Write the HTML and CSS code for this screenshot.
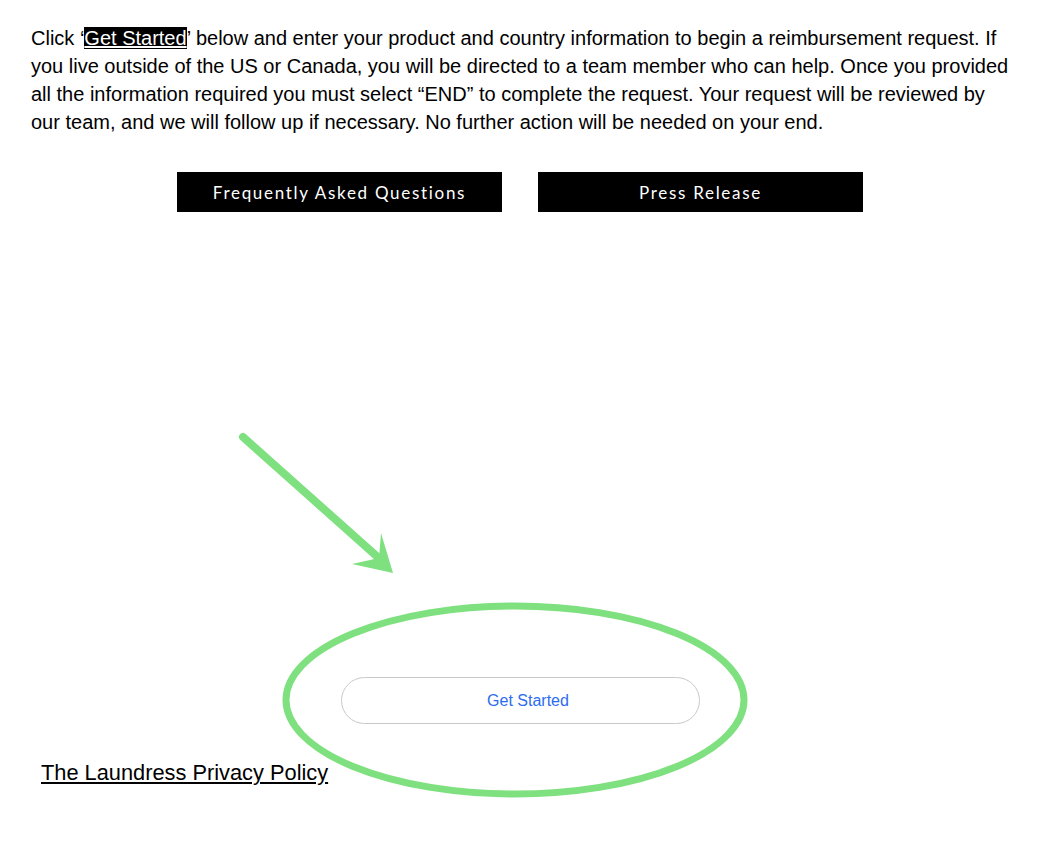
FILE: index.html
```html
<!DOCTYPE html>
<html lang="en">

<head>
    <meta charset="UTF-8">
    <meta name="viewport" content="width=device-width, initial-scale=1.0">
    <title>Reimbursement Request</title>
    <link rel="stylesheet" href="styles.css">
</head>

<body>

    <main class="page">
        <p class="intro">
            Click &lsquo;<span class="mark">Get Started</span>&rsquo; below and enter your product and country information to begin a reimbursement request. If you live outside of the US or Canada, you will be directed to a team member who can help. Once you provided all the information required you must select &ldquo;END&rdquo; to complete the request. Your request will be reviewed by our team, and we will follow up if necessary. No further action will be needed on your end.
        </p>

        <div class="links">
            <a class="black-btn" href="#">Frequently Asked Questions</a>
            <a class="black-btn" href="#">Press Release</a>
        </div>

        <div class="start">
            <a class="start-btn" href="#">Get Started</a>
        </div>

        <div class="footer">
            <a class="privacy" href="#">The Laundress Privacy Policy</a>
        </div>

        <!-- green annotation drawn over the page -->
        <svg class="annotation" width="1038" height="850" viewBox="0 0 1038 850">
            <line x1="243" y1="437" x2="381" y2="560" stroke="#7fe07f" stroke-width="8" stroke-linecap="round" />
            <polygon points="381,533 393,573 352,564 379,558" fill="#7fe07f" />
            <ellipse cx="515" cy="700" rx="229" ry="94" fill="none" stroke="#7fe07f" stroke-width="7" />
        </svg>
    </main>

</body>

</html>
```

FILE: styles.css
```css
* {
    margin: 0;
    padding: 0;
    box-sizing: border-box;
}

body {
    font-family: "Liberation Sans", Arial, sans-serif;
    background: #fff;
    color: #000;
}

.page {
    position: relative;
    width: 1038px;
    height: 850px;
    overflow: hidden;
}

.intro {
    padding: 24px 24px 0 31px;
    font-size: 20px;
    line-height: 28px;
}

.mark {
    background: #000;
    color: #fff;
    text-decoration: underline;
}

.links {
    display: flex;
    justify-content: center;
    gap: 36px;
    margin-top: 36px;
    padding-left: 2px;
}

.black-btn {
    display: flex;
    align-items: center;
    justify-content: center;
    width: 325px;
    height: 40px;
    background: #000;
    color: #fff;
    font-family: Lato, sans-serif;
    font-size: 17px;
    letter-spacing: 1.7px;
    text-decoration: none;
}

.start {
    display: flex;
    justify-content: center;
    padding-left: 2px;
    margin-top: 465px;
}

.start-btn {
    display: flex;
    align-items: center;
    justify-content: center;
    width: 359px;
    height: 47px;
    padding-left: 16px;
    border: 1px solid #c9c9cc;
    border-radius: 24px;
    color: #2d6cf0;
    font-size: 16px;
    text-decoration: none;
}

.footer {
    padding: 37px 0 0 41px;
}

.privacy {
    color: #000;
    font-size: 21.8px;
    line-height: 24px;
}

.annotation {
    position: absolute;
    left: 0;
    top: 0;
    pointer-events: none;
}
```
